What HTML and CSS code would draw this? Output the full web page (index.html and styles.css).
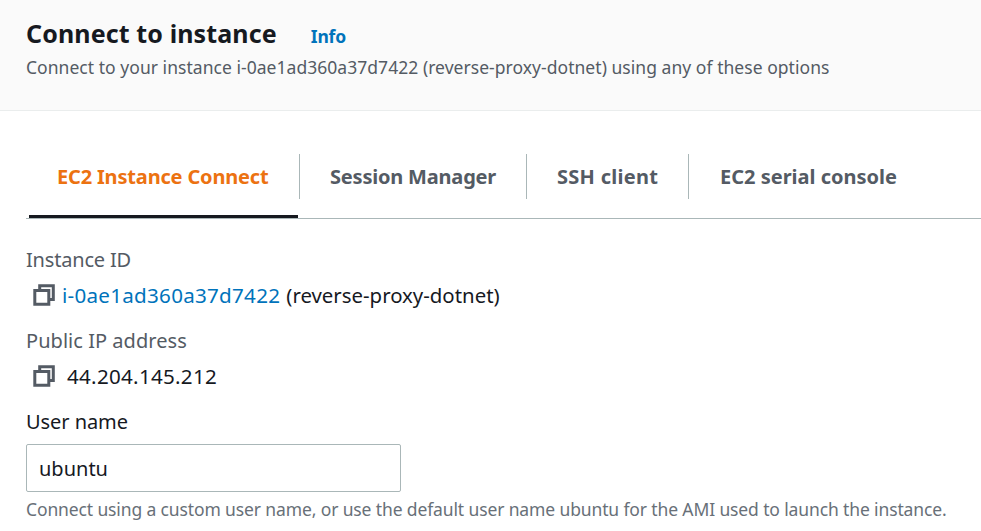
FILE: index.html
```html
<!DOCTYPE html>
<html lang="en">
<head>
<meta charset="utf-8">
<title>Connect to instance</title>
<link rel="stylesheet" href="styles.css">
</head>
<body>
<header class="header">
  <div class="heading"><h1>Connect to instance</h1><a class="info">Info</a></div>
  <p class="subtitle">Connect to your instance i-0ae1ad360a37d7422 (reverse-proxy-dotnet) using any of these options</p>
</header>
<main>
  <nav class="tabs">
    <a class="tab tab-active"><span>EC2 Instance Connect</span></a>
    <a class="tab tab-session"><span>Session Manager</span></a>
    <a class="tab tab-ssh"><span>SSH client</span></a>
    <a class="tab tab-serial"><span>EC2 serial console</span></a>
  </nav>
  <section class="content">
    <div class="label label-id">Instance ID</div>
    <div class="value">
      <svg class="copy" viewBox="0 0 22 22"><path d="M6.7 5.5V1.8h13.6v13.8h-3.5M1.8 6.5h14v13.7h-14z"/></svg>
      <a class="link">i-0ae1ad360a37d7422</a><span class="name">(reverse-proxy-dotnet)</span>
    </div>
    <div class="label label-ip">Public IP address</div>
    <div class="value">
      <svg class="copy" viewBox="0 0 22 22"><path d="M6.7 5.5V1.8h13.6v13.8h-3.5M1.8 6.5h14v13.7h-14z"/></svg>
      <span class="ip">44.204.145.212</span>
    </div>
    <label class="label label-user" for="user">User name</label>
    <input id="user" class="input" value="ubuntu">
    <p class="hint">Connect using a custom user name, or use the default user name ubuntu for the AMI used to launch the instance.</p>
  </section>
</main>
</body>
</html>
```

FILE: styles.css
```css
* { box-sizing: border-box; }
body { margin: 0; height: 531px; overflow: hidden; background: #fff; color: #16191f; font-family: "Noto Sans", sans-serif; font-size: 20px; }
.header { height: 111px; padding: 15px 26px 0; background: #fafafa; border-bottom: 1px solid #eaeded; }
.heading { display: flex; align-items: baseline; gap: 34px; height: 40px; }
h1 { margin: 0; font-size: 25px; line-height: 36px; font-weight: 700; letter-spacing: 0.12px; white-space: nowrap; }
.info { color: #0073bb; font-size: 17.5px; font-weight: 700; letter-spacing: -0.2px; }
.subtitle { margin: 0; color: #545b64; font-size: 17.5px; line-height: 24px; letter-spacing: 0.04px; white-space: nowrap; }
.tabs { display: flex; height: 108px; margin-left: 26px; padding: 43px 0 0 2px; border-bottom: 1px solid #aab7b8; }
.tab { height: 45px; display: flex; align-items: center; padding: 0 30px; border-right: 1px solid #aab7b8; color: #545b64; font-size: 20px; font-weight: 700; white-space: nowrap; }
.tab-active { width: 272px; padding: 0 0 0 29px; color: #ec7211; position: relative; letter-spacing: -0.17px; }
.tab-active::after { content: ""; position: absolute; left: 1px; right: 1px; bottom: -19px; height: 3px; background: #16191f; }
.tab-session { width: 227px; letter-spacing: -0.2px; }
.tab-ssh { width: 162px; letter-spacing: 0.28px; }
.tab-serial { border: 0; padding-left: 31px; }
.content { padding: 27px 26px 0; }
.label { display: block; height: 28px; line-height: 28px; color: #545b64; }
.label-id { letter-spacing: -0.18px; }
.label-ip { margin-top: 9px; letter-spacing: 0.04px; }
.label-user { margin-top: 9px; color: #16191f; letter-spacing: -0.06px; }
.value { display: flex; align-items: center; height: 44px; padding: 0 0 2px 7px; white-space: nowrap; }
.copy { width: 22px; height: 22px; margin-right: 7px; fill: none; stroke: #545b64; stroke-width: 3; }
.link { color: #0073bb; margin-right: 6px; font-size: 20.6px; letter-spacing: 0.27px; }
.name { font-size: 20.4px; }
.ip { margin-left: 5px; font-size: 20.6px; letter-spacing: 0.28px; }
.input { display: block; width: 375px; height: 48px; margin-top: 8px; padding: 0 12px; border: 1px solid #aab7b8; border-radius: 2px; background: #fff; color: #16191f; font: 20px "Noto Sans", sans-serif; }
.hint { margin: 5px 0 0; color: #687078; font-size: 17.5px; line-height: 24px; letter-spacing: -0.127px; white-space: nowrap; }
```
